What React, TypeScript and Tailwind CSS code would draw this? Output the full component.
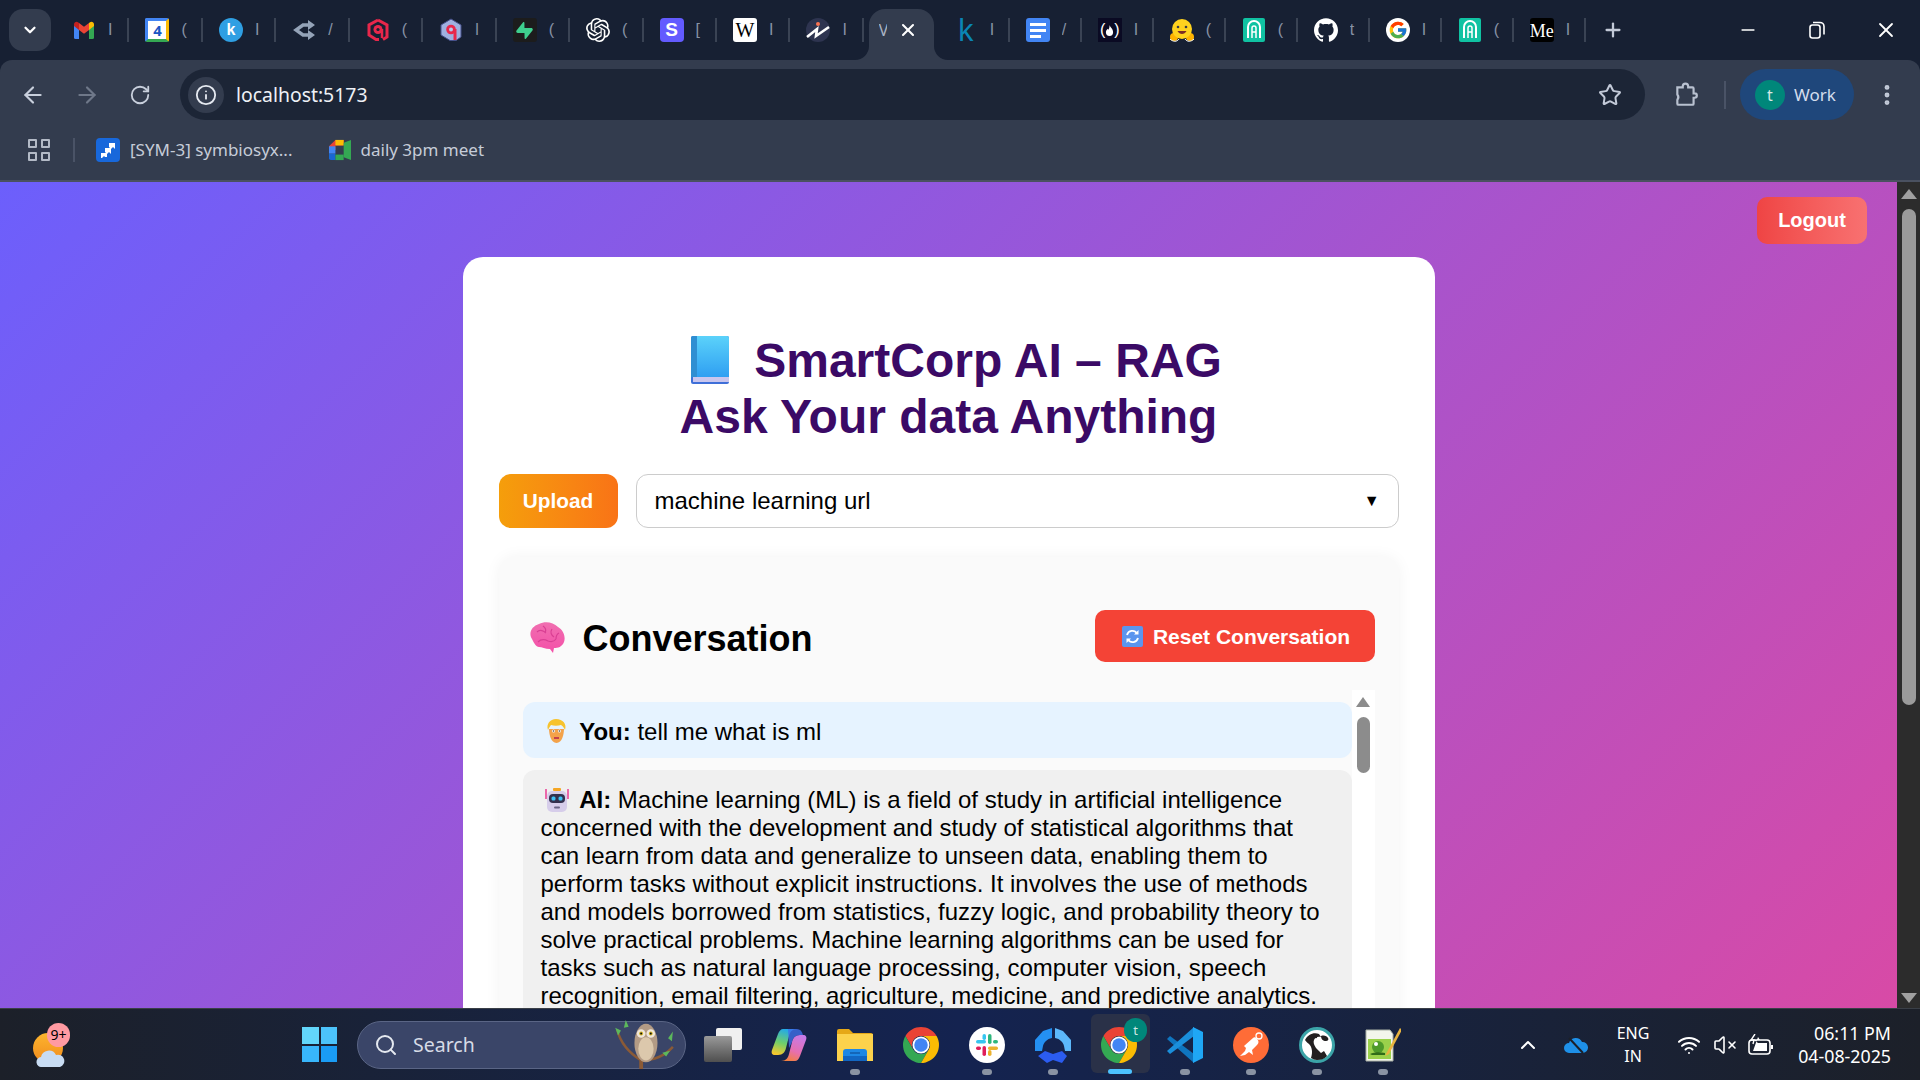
import { ArrowLeft, ArrowRight, RotateCw, Info, Star, EllipsisVertical, ChevronDown, ChevronUp, Plus, X, Minus, Search, Wifi, VolumeX } from "lucide-react"
import { SiOpenai, SiGithub, SiSupabase } from "react-icons/si"
import { FcGoogle } from "react-icons/fc"
import type { ReactNode } from "react"

const Gmail = () => (
  <svg viewBox="0 0 24 24" className="w-6 h-6">
    <path d="M2 6.5V19.5a1.5 1.5 0 0 0 1.500 1.500H7V11z" fill="#4285f4" />
    <path d="M22 6.500V19.500a1.500 1.500 0 0 1-1.500 1.500H17V11z" fill="#34a853" />
    <path d="M7 12 2 8V6.500C2 4 4.500 3 6 4.200L7 5z" fill="#c5221f" />
    <path d="M17 12l5-4V6.500C22 4 19.500 3 18 4.200L17 5z" fill="#fbbc04" />
    <path d="M7 5v7l5 3.800L17 12V5l-5 3.800z" fill="#ea4335" />
  </svg>
)

const Calendar = () => (
  <div className="w-6 h-6 bg-white rounded-[2px] border-[3px] border-t-[#4285f4] border-l-[#4285f4] border-r-[#fbbc04] border-b-[#34a853] flex items-center justify-center text-[#1a56c4] text-[15px] font-bold leading-none">4</div>
)

const Share = () => (
  <svg viewBox="0 0 24 24" className="w-6 h-6" fill="#94a3b8">
    <path d="M18 7h-7l-7 5 7 5h7" fill="none" stroke="#94a3b8" strokeWidth="3.400" />
    <path d="M16 2l7 5-7 5zM16 12l7 5-7 5z" />
  </svg>
)

const HexRed = () => (
  <svg viewBox="0 0 24 24" className="w-6 h-6">
    <path d="M12 2 21 7v12l-4 2.500M12 2 3 7v10l7 4.500h3" fill="none" stroke="#e8274b" strokeWidth="3" />
    <circle cx="12" cy="11.500" r="4.500" fill="#e8274b" />
    <circle cx="12" cy="11.500" r="1.600" fill="#172033" />
    <path d="M16 11v9" stroke="#e8274b" strokeWidth="2.500" />
  </svg>
)

const HexBlue = () => (
  <svg viewBox="0 0 24 24" className="w-6 h-6">
    <path d="M12 1 22 7v12l-5 3.500H11L2 17V7z" fill="#9fb0e0" stroke="#46508a" strokeWidth="1" />
    <circle cx="12" cy="11.500" r="4.800" fill="#e8274b" />
    <circle cx="12" cy="11.500" r="2" fill="#b9c6ec" />
    <path d="M16 11v11" stroke="#e8274b" strokeWidth="3" />
  </svg>
)

const Zig = () => (
  <svg viewBox="0 0 24 24" className="w-6 h-6">
    <ellipse cx="12" cy="12" rx="12" ry="12" fill="#2e3450" />
    <circle cx="12" cy="6" r="2" fill="#f97352" />
    <path d="M1 19 11 11l-1 7L23 9" fill="none" stroke="#fff" strokeWidth="2.600" />
  </svg>
)

const Docs = () => (
  <div className="w-6 h-6 bg-[#4285f4] rounded-[3px] flex flex-col justify-center gap-[3px] px-[4px]">
    <div className="h-[3px] bg-white" />
    <div className="h-[3px] bg-white" />
    <div className="h-[3px] w-[11px] bg-white" />
  </div>
)

const Fcc = () => (
  <div className="w-6 h-6 bg-[#0a0a23] text-white text-[16px] flex items-center justify-center leading-none" style={{ fontFamily: "Liberation Sans" }}>
    (<svg viewBox="0 0 10 12" className="w-[9px] h-[11px]"><path d="M5 0c1 3 4 4 4 8a4 4 0 0 1-8 0c0-2 1-3 2-4 0 1 1 1 1 1 1-2 1-3 1-5z" fill="#fff" /></svg>)
  </div>
)

const Hug = () => (
  <svg viewBox="0 0 24 24" className="w-6 h-6">
    <circle cx="4" cy="19" r="4" fill="#ffb300" />
    <circle cx="20" cy="19" r="4" fill="#ffb300" />
    <circle cx="12" cy="11" r="10" fill="#ffd21e" />
    <circle cx="8" cy="9" r="1.300" fill="#3a3b45" />
    <circle cx="16" cy="9" r="1.300" fill="#3a3b45" />
    <path d="M7.500 13c2 4 7 4 9 0z" fill="#7b2d26" />
    <path d="M0 21c3 3 7 3 9 0M24 21c-3 3-7 3-9 0" stroke="#fff" strokeWidth="1" fill="none" />
  </svg>
)

const Teal = () => (
  <svg viewBox="0 0 24 24" className="w-6 h-6">
    <rect x="1" width="22" height="24" rx="2" fill="#10c2a2" />
    <path d="M6 20V9a6 6 0 0 1 12 0v11" fill="none" stroke="#fff" strokeWidth="2" />
    <path d="M10 20v-10a2 2 0 0 1 4 0v10M10 14h4" fill="none" stroke="#fff" strokeWidth="1.500" />
  </svg>
)

type Tab = { icon: ReactNode; frag: string }

const leftTabs: Tab[] = [
  { icon: <Gmail />, frag: "I" },
  { icon: <Calendar />, frag: "(" },
  { icon: <div className="w-6 h-6 rounded-full bg-[#2f9fe3] text-white text-[16px] font-bold flex items-center justify-center" style={{ fontFamily: "Liberation Sans" }}>k</div>, frag: "I" },
  { icon: <Share />, frag: "/" },
  { icon: <HexRed />, frag: "(" },
  { icon: <HexBlue />, frag: "l" },
  { icon: <div className="w-6 h-6 bg-[#1c1c1c] rounded-[3px] flex items-center justify-center"><SiSupabase className="w-[17px] h-[17px] text-[#3ecf8e]" /></div>, frag: "(" },
  { icon: <SiOpenai className="w-6 h-6 text-white" />, frag: "(" },
  { icon: <div className="w-6 h-6 rounded-[4px] bg-[#635bff] text-white text-[19px] font-bold flex items-center justify-center" style={{ fontFamily: "Liberation Sans" }}>S</div>, frag: "[" },
  { icon: <div className="w-6 h-6 rounded-[3px] bg-white text-black text-[20px] flex items-center justify-center" style={{ fontFamily: "Liberation Serif" }}>W</div>, frag: "I" },
  { icon: <Zig />, frag: "I" },
]

const rightTabs: Tab[] = [
  { icon: <div className="w-6 h-6 text-[#0a85b5] text-[30px] flex items-center justify-center leading-none" style={{ fontFamily: "Noto Sans" }}>k</div>, frag: "I" },
  { icon: <Docs />, frag: "/" },
  { icon: <Fcc />, frag: "I" },
  { icon: <Hug />, frag: "(" },
  { icon: <Teal />, frag: "(" },
  { icon: <SiGithub className="w-6 h-6 text-white" />, frag: "t" },
  { icon: <div className="w-6 h-6 rounded-full bg-white flex items-center justify-center"><FcGoogle className="w-5 h-5" /></div>, frag: "I" },
  { icon: <Teal />, frag: "(" },
  { icon: <div className="w-6 h-6 rounded-[3px] bg-black text-white text-[18px] overflow-hidden" style={{ fontFamily: "Liberation Serif" }}>Me</div>, frag: "I" },
]

function TabItem({ tab, wide }: { tab: Tab; wide: boolean }) {
  return (
    <div className={`flex items-center h-6 shrink-0 pl-4 ${wide ? "w-[73.45px]" : "w-[72px]"}`}>
      <div className="w-6 h-6 shrink-0">{tab.icon}</div>
      <span className="ml-[12px] w-[8px] overflow-hidden text-[16px] text-[#8792a6] leading-6" style={{ fontFamily: "Liberation Sans" }}>{tab.frag}</span>
      <div className="ml-auto w-[2px] h-6 bg-[#3a4354]" />
    </div>
  )
}

function TabStrip() {
  return (
    <div className="h-[60px] bg-[#172033] flex items-center shrink-0">
      <div className="ml-[9px] w-[42px] h-[42px] rounded-[14px] bg-[#333c4e] flex items-center justify-center mr-[5px] shrink-0">
        <ChevronDown className="w-[18px] h-[18px] text-white" strokeWidth={3} />
      </div>
      {leftTabs.map((t, i) => <TabItem key={i} tab={t} wide />)}
      <div className="relative self-end h-[51px] w-[65px] ml-[5px] mr-[4px] bg-[#333c4e] rounded-t-[16px] flex items-start pt-[11px] shrink-0">
        <svg viewBox="0 0 14 14" className="absolute bottom-0 -left-[14px] w-[14px] h-[14px]"><path d="M14 0v14H0a14 14 0 0 0 14-14z" fill="#333c4e" /></svg>
        <svg viewBox="0 0 14 14" className="absolute bottom-0 -right-[14px] w-[14px] h-[14px]"><path d="M0 0v14h14A14 14 0 0 1 0 0z" fill="#333c4e" /></svg>
        <span className="ml-[10px] w-[8px] overflow-hidden text-[16px] leading-[20px] text-[#aab3c4]">V</span>
        <X className="ml-[11px] w-[20px] h-[20px] text-white" strokeWidth={2.500} />
      </div>
      {rightTabs.map((t, i) => <TabItem key={i} tab={t} wide={false} />)}
      <Plus className="ml-[16px] w-[22px] h-[22px] text-[#c3cad8]" strokeWidth={2.500} />
      <div className="ml-auto flex text-white shrink-0">
        <div className="w-[69px] h-[60px] flex items-center justify-center"><Minus className="w-[20px] h-[20px]" strokeWidth={2} /></div>
        <div className="w-[69px] h-[60px] flex items-center justify-center">
          <svg viewBox="0 0 16 18" className="w-[16px] h-[18px]" fill="none" stroke="#fff" strokeWidth="1.600"><rect x="1" y="4" width="10" height="13" rx="2.500" /><path d="M4 1.500h7a4 4 0 0 1 4 4v8" /></svg>
        </div>
        <div className="w-[69px] h-[60px] flex items-center justify-center"><X className="w-[24px] h-[24px]" strokeWidth={1.800} /></div>
      </div>
    </div>
  )
}

function Toolbar() {
  return (
    <div className="h-[60px] bg-[#333c4e] rounded-t-[12px] flex shrink-0 pt-[9px]">
      <div className="w-[180px] h-[51px] flex items-center shrink-0">
        <ArrowLeft className="ml-[20px] w-[26px] h-[26px] text-[#c8cfdc]" strokeWidth={2} />
        <ArrowRight className="ml-[28px] w-[26px] h-[26px] text-[#6f7889]" strokeWidth={2} />
        <RotateCw className="ml-[29px] w-[22px] h-[22px] text-[#c8cfdc]" strokeWidth={2} />
      </div>
      <div className="w-[1465px] h-[51px] rounded-full bg-[#1c2536] flex items-center pl-2 shrink-0">
        <div className="w-9 h-9 rounded-full bg-[#333c4e] flex items-center justify-center">
          <Info className="w-[22px] h-[22px] text-[#e5e9f0]" strokeWidth={2} />
        </div>
        <span className="ml-3 text-[19.400px] text-[#eef1f6]">localhost:5173</span>
        <Star className="ml-auto mr-[23px] w-[24px] h-[24px] text-[#c3cad8]" strokeWidth={2} />
      </div>
      <div className="flex-1 h-[51px] flex items-center">
        <svg viewBox="0 0 24 24" className="ml-[28px] w-[26px] h-[26px]" fill="none" stroke="#b9c1d0" strokeWidth="2">
          <path d="M4 5h5V4a2.500 2.500 0 0 1 5 0v1h4a1 1 0 0 1 1 1v4.500h1a2 2 0 0 1 0 4h-1V20a1 1 0 0 1-1 1H5a1 1 0 0 1-1-1v-3.500a4 4 0 0 0 0-5z" />
        </svg>
        <div className="ml-[25px] w-[2px] h-[28px] bg-[#4a5366]" />
        <div className="ml-[14px] w-[114px] h-[51px] rounded-full bg-[#1f477b] flex items-center pl-[15px]">
          <div className="w-[30px] h-[30px] rounded-full bg-[#00877a] flex items-center justify-center text-[#d5e8e5] text-[16px]">t</div>
          <span className="ml-[9px] text-[#d3dded] text-[17px]">Work</span>
        </div>
        <EllipsisVertical className="ml-[20px] w-[26px] h-[26px] text-[#c3cad8]" strokeWidth={2.500} />
      </div>
    </div>
  )
}

function Bookmarks() {
  return (
    <div className="h-[62px] bg-[#333c4e] border-b-2 border-[#4a5160] flex items-center shrink-0">
      <div className="ml-[28px] w-[22px] h-[22px] grid grid-cols-2 gap-[4px] shrink-0">
        <div className="border-2 border-[#b3bac6] rounded-[1px]" />
        <div className="border-2 border-[#b3bac6] rounded-[1px]" />
        <div className="border-2 border-[#b3bac6] rounded-[1px]" />
        <div className="border-2 border-[#b3bac6] rounded-[1px]" />
      </div>
      <div className="ml-[23px] w-[2px] h-6 bg-[#4a5366]" />
      <div className="ml-[21px] w-6 h-6 rounded-[4px] bg-[#1868db] flex items-center justify-center">
        <svg viewBox="0 0 16 16" className="w-[16px] h-[16px]" fill="#fff"><path d="M9 1h6v6l-2-2-2 2-2-2zM5 6h6v6l-2-2-2 2-2-2zM1 11h6v4H5l-1-1-2 2H1z" /></svg>
      </div>
      <span className="ml-[10px] text-[17px] text-[#c6ccd8]">[SYM-3] symbiosyx...</span>
      <svg viewBox="0 0 24 22" className="ml-[36px] w-[22px] h-[22px]">
        <path d="M7 0h9v6H7v5H0V7z" fill="#ea4335" />
        <path d="M7 0h9v6H7z" fill="#fbbc04" />
        <path d="M0 7h7v8H0z" fill="#4285f4" />
        <path d="M0 15h7v7H2a2 2 0 0 1-2-2z" fill="#1967d2" />
        <path d="M7 16h9v6H7z" fill="#34a853" />
        <path d="M16 3v16l8 3V0z" fill="#34a853" />
      </svg>
      <span className="ml-[10px] text-[17px] text-[#c6ccd8]">daily 3pm meet</span>
    </div>
  )
}

const Book = () => (
  <svg viewBox="0 0 38 48" className="inline-block ml-[16px] mr-[25px] w-[38px] h-[48px] align-[-7px]">
    <defs>
      <linearGradient id="bk" x1="0" y1="0" x2="0" y2="1"><stop offset="0" stopColor="#5bd2fa" /><stop offset="1" stopColor="#2f9ff2" /></linearGradient>
    </defs>
    <rect width="38" height="48" rx="2" fill="#3f6fd8" />
    <rect x="2" y="41" width="36" height="5" fill="#c9c6ee" />
    <path d="M6 0h30a2 2 0 0 1 2 2v39H6z" fill="url(#bk)" />
    <path d="M2 0h4v41H2a2 2 0 0 0-2 2V2a2 2 0 0 1 2-2z" fill="#2f8fd2" />
  </svg>
)

const Brain = () => (
  <svg viewBox="0 0 36 32" className="inline-block ml-[6px] mr-[18px] w-[36px] h-[32px] align-[-3px]">
    <defs>
      <linearGradient id="br" x1="0" y1="0" x2="0" y2="1"><stop offset="0" stopColor="#f06fb0" /><stop offset="1" stopColor="#f44fa8" /></linearGradient>
    </defs>
    <path d="M3 17C-1 11 3 4 10 2c6-3 14-2 19 3 5 3 8 9 6 15-2 5-6 6-10 6l-1 5-3-4c-5 0-8-2-11-2-3 0-5-4-7-8z" fill="url(#br)" />
    <path d="M8 10c3-3 7-1 9 1M14 4c3 2 3 5 2 7M23 7c-2 3-1 6 2 8M9 20c3-3 6-3 10-1 3 1 6 1 8-2M30 11c-2 1-3 3-3 6" fill="none" stroke="#d93f93" strokeWidth="1.200" />
  </svg>
)

const Person = () => (
  <span className="inline-block w-[32px] pl-[5px] align-[-3px]">
    <svg viewBox="0 0 21 24" className="w-[21px] h-[24px] block">
      <path d="M3 10C3 15 5 24 10.500 24S18 15 18 10z" fill="#f3a24a" />
      <path d="M2 11C0 5 4 0 10 0c7 0 11 5 9 11-1-2-2-4-4-5-3 1-7 1-10 0-1 1-2 3-3 5z" fill="#f7c32e" />
      <circle cx="7.500" cy="12" r="1.500" fill="#fff" /><circle cx="13.500" cy="12" r="1.500" fill="#fff" />
      <circle cx="7.500" cy="12" r=".8" fill="#444" /><circle cx="13.500" cy="12" r=".8" fill="#444" />
      <path d="M8 19h5" stroke="#b3204d" strokeWidth="1.500" />
    </svg>
  </span>
)

const Robot = () => (
  <span className="inline-block w-[32px] pl-[4px] align-[-4px]">
    <svg viewBox="0 0 24 24" className="w-[24px] h-[24px] block">
      <rect x="8" y="0" width="8" height="3" rx="1" fill="#f5a623" />
      <path d="M1 1v10M23 1v10" stroke="#ec4899" strokeWidth="1.600" />
      <rect x="2" y="3" width="20" height="21" rx="5" fill="#d6cdea" />
      <rect x="4" y="6" width="16" height="9" rx="4" fill="#33304d" />
      <rect x="6.500" y="8.500" width="4" height="4" rx="1.500" fill="#3fc1f5" />
      <rect x="13.500" y="8.500" width="4" height="4" rx="1.500" fill="#3fc1f5" />
      <rect x="9" y="18.500" width="6" height="2" rx="1" fill="#6a6585" />
    </svg>
  </span>
)

const Refresh = () => (
  <svg viewBox="0 0 21 21" className="inline-block ml-[3px] mr-[10px] w-[21px] h-[21px] align-[-3px]">
    <rect width="21" height="21" rx="2" fill="#5b95ee" />
    <path d="M5 9a5.500 5.500 0 0 1 10-1.500M16 12a5.500 5.500 0 0 1-10 1.500" fill="none" stroke="#fff" strokeWidth="1.800" />
    <path d="M16.500 4v4.500H12zM4.500 17v-4.500H9z" fill="#fff" />
  </svg>
)

function Chat() {
  return (
    <div className="mt-[25px] flex">
      <div className="w-[829px] flex flex-col gap-3 pt-3">
        <div className="bg-[#e6f3ff] rounded-xl px-[18px] pt-[16px] pb-[12px] leading-[28px]">
          <Person /> <b>You:</b> tell me what is ml
        </div>
        <div className="bg-[#f0f0f0] rounded-xl px-[18px] pt-[16px] pb-[12px] leading-[28px]">
          <Robot /> <b>AI:</b> Machine learning (ML) is a field of study in artificial intelligence concerned with the development and study of statistical algorithms that can learn from data and generalize to unseen data, enabling them to perform tasks without explicit instructions. It involves the use of methods and models borrowed from statistics, fuzzy logic, and probability theory to solve practical problems. Machine learning algorithms can be used for tasks such as natural language processing, computer vision, speech recognition, email filtering, agriculture, medicine, and predictive analytics.
        </div>
      </div>
      <div className="w-[23px] bg-white flex flex-col items-center pt-[7px]">
        <div className="w-0 h-0 border-x-[7px] border-x-transparent border-b-[10px] border-b-[#8c8c8c]" />
        <div className="mt-[10px] w-[13px] h-[56px] rounded-full bg-[#8c8c8c]" />
      </div>
    </div>
  )
}

function Page() {
  return (
    <main className="relative flex-1 min-h-0 flex overflow-hidden" style={{ fontFamily: '"Liberation Sans", Arial, sans-serif' }}>
      <div className="relative flex-1 bg-[linear-gradient(135deg,#6c5ffc,#d84aa6)] pt-[75px]">
        <button className="absolute top-[15px] right-[30px] w-[110px] h-[47px] pb-[1px] rounded-[10px] bg-gradient-to-r from-[#ef4444] to-[#f87171] text-white text-[20px] font-bold">Logout</button>
        <div className="mx-auto w-[972px] bg-white rounded-[20px] px-9 pt-[76px] pb-10 text-[24px] text-black">
          <h1 className="text-[48px] leading-[56px] font-bold text-center text-[#3b0a66]">
            <Book />SmartCorp AI – RAG<br />Ask Your data Anything
          </h1>
          <div className="mt-[29px] flex gap-[18px]">
            <button className="w-[119px] h-[54px] rounded-xl bg-gradient-to-r from-[#f59e0b] to-[#f97316] text-white text-[20.800px] font-bold">Upload</button>
            <div className="flex-1 h-[54px] rounded-xl border border-[#cccccc] bg-white flex items-center pl-[18px] pr-[18px]">
              <span>machine learning url</span>
              <span className="ml-auto text-[16px]">▼</span>
            </div>
          </div>
          <div className="mt-[29px] bg-[#fafafa] rounded-2xl shadow-[0_0_16px_rgba(0,0,0,0.05)] px-6 pt-[53px] pb-6">
            <div className="flex items-start justify-between">
              <h2 className="text-[36px] font-bold leading-[52px] pt-[3px]"><Brain />Conversation</h2>
              <button className="w-[280px] h-[52px] pt-[2px] rounded-[10px] bg-[#f44336] text-white text-[21px] font-bold"><Refresh />Reset Conversation</button>
            </div>
            <Chat />
          </div>
        </div>
      </div>
      <aside className="w-[23px] bg-[#2c2c2c] flex flex-col items-center pt-[7px] shrink-0">
        <div className="w-0 h-0 border-x-[8px] border-x-transparent border-b-[10px] border-b-[#a0a0a0]" />
        <div className="mt-[10px] w-[14px] h-[496px] rounded-full bg-[#9b9b9b]" />
        <div className="mt-auto mb-[5px] w-0 h-0 border-x-[8px] border-x-transparent border-t-[10px] border-t-[#a0a0a0]" />
      </aside>
    </main>
  )
}

const Chrome = () => (
  <svg viewBox="0 0 24 24" className="w-9 h-9">
    <path d="M22.390 6A12 12 0 0 0 1.610 6L6.800 15A6 6 0 0 1 12 6z" fill="#ea4335" />
    <path d="M1.610 6A12 12 0 0 0 12 24L17.200 15A6 6 0 0 1 6.800 15z" fill="#34a853" />
    <path d="M12 24A12 12 0 0 0 22.390 6H12A6 6 0 0 1 17.200 15z" fill="#fbbc04" />
    <circle cx="12" cy="12" r="5.700" fill="#fff" />
    <circle cx="12" cy="12" r="4.500" fill="#4285f4" />
  </svg>
)

const Copilot = () => (
  <svg viewBox="0 0 36 36" className="w-9 h-9">
    <defs>
      <linearGradient id="cp1" x1="0.600" y1="0" x2="0.300" y2="1"><stop offset="0" stopColor="#1fa8ee" /><stop offset=".55" stopColor="#6fce6a" /><stop offset="1" stopColor="#f5c72e" /></linearGradient>
      <linearGradient id="cp2" x1="0.700" y1="0" x2="0.300" y2="1"><stop offset="0" stopColor="#c77be8" /><stop offset=".6" stopColor="#e66fb0" /><stop offset="1" stopColor="#f2803f" /></linearGradient>
    </defs>
    <path d="M12 2h14c-5 0-7 3-8 7l-3 12c-1 4-3 7-8 7H4c-3 0-4-2-3-5L7 7c1-3 3-5 5-5z" fill="url(#cp1)" />
    <path d="M24 34H10c5 0 7-3 8-7l3-12c1-4 3-7 8-7h3c3 0 4 2 3 5l-6 16c-1 3-3 5-5 5z" fill="url(#cp2)" />
    <path d="M17 2h9c3 0 5 2 6 6h-3c-5 0-7 3-8 7l-3 6z" fill="#3f6fe8" opacity=".8" />
  </svg>
)

const Folder = () => (
  <svg viewBox="0 0 36 36" className="w-9 h-9">
    <path d="M0 4a2 2 0 0 1 2-2h10l4 4h18a2 2 0 0 1 2 2v4H0z" fill="#e6a817" />
    <path d="M0 7h36v27H0z" fill="#fcd24c" />
    <path d="M6 34v-9a3 3 0 0 1 3-3h18a3 3 0 0 1 3 3v9z" fill="#1e88e5" />
    <path d="M6 29h24v5H6z" fill="#1266c2" />
    <path d="M13 26h10" stroke="#0f4f99" strokeWidth="1.200" />
  </svg>
)

const Slack = () => (
  <div className="w-9 h-9 rounded-full bg-white flex items-center justify-center">
    <svg viewBox="0 0 24 24" className="w-6 h-6">
      <rect x="1" y="7" width="10" height="3.500" rx="1.750" fill="#36c5f0" />
      <rect x="7.500" y="1" width="3.500" height="6" rx="1.750" fill="#36c5f0" />
      <rect x="13" y="1" width="3.500" height="10" rx="1.750" fill="#2eb67d" />
      <rect x="18" y="7" width="5" height="3.500" rx="1.750" fill="#2eb67d" />
      <rect x="13" y="13.500" width="10" height="3.500" rx="1.750" fill="#ecb22e" />
      <rect x="13" y="17" width="3.500" height="6" rx="1.750" fill="#ecb22e" />
      <rect x="1" y="13.500" width="5" height="3.500" rx="1.750" fill="#e01e5a" />
      <rect x="7.500" y="13" width="3.500" height="10" rx="1.750" fill="#e01e5a" />
    </svg>
  </div>
)

const Cube = () => (
  <svg viewBox="0 0 36 36" className="w-9 h-9">
    <path d="M17 1v10c-5 1-8 4-9 8l-1 5H0V13l8-9z" fill="#2490f2" />
    <path d="M20 1v10c5 1 8 4 9 8l1 5h6V13l-8-9z" fill="#5cb8fb" />
    <path d="M3 29l7-5 8 3 9-3 5 5-5 7-9-3-6 3z" fill="#2b5cf0" />
  </svg>
)

const VSCode = () => (
  <svg viewBox="0 0 36 36" className="w-9 h-9">
    <path d="M0 12l3-3 24 18v9z" fill="#0f75bf" />
    <path d="M0 24l3 3L27 9V0z" fill="#1a8fdc" />
    <path d="M26 0l10 5v26l-10 5z" fill="#1fa7f5" />
  </svg>
)

const Postman = () => (
  <svg viewBox="0 0 36 36" className="w-9 h-9">
    <circle cx="18" cy="18" r="18" fill="#ff6c37" />
    <circle cx="26" cy="9" r="3" fill="none" stroke="#fff" strokeWidth="1.300" />
    <path d="M24 12c2 2 2 4 0 6l-5 5 1 5-4-3-4 3-5 1 5-5 1-3-2-2 9-8c1-1 3-1 4 1z" fill="#fff" />
  </svg>
)

const Beaver = () => (
  <svg viewBox="0 0 36 36" className="w-9 h-9">
    <circle cx="18" cy="18" r="16.500" fill="#fff" stroke="#3ba4a8" strokeWidth="3" />
    <path d="M6 13c3-6 9-8 14-6l2 3c-3-1-6 0-7 3-1 2 0 5 2 8l5 5 3-2 3 5c-3 3-6 4-10 4-2 0-4-1-6-2 2-6 1-11-2-14-2-1-3-3-4-4z" fill="#231f20" />
    <path d="M22 9c3-1 6 0 7 2 1 1 0 3-2 3-3 0-5-2-5-5z" fill="#231f20" />
    <circle cx="17" cy="10" r="1.200" fill="#231f20" />
  </svg>
)

const Notepad = () => (
  <svg viewBox="0 0 36 36" className="w-9 h-9">
    <path d="M1 3h24l3 4v27H1z" fill="#f3f6ec" stroke="#a9b0a5" strokeWidth="1" />
    <path d="M3 12h23v20H3z" fill="#9ad14b" />
    <circle cx="13" cy="20" r="6" fill="#4e9a2a" />
    <circle cx="11" cy="17" r="2" fill="#fff" />
    <path d="M5 27c4-2 10-2 15-1v2H7z" fill="#2f6b18" />
    <path d="M35 1 22 25l-2 4 4-2 13-24z" fill="#e8b33f" />
  </svg>
)

const Weather = () => (
  <div className="relative w-[37px] h-[44px] shrink-0">
    <div className="absolute left-0 top-[10px] w-[30px] h-[30px] rounded-full bg-gradient-to-b from-[#fdb52e] to-[#f08b1d]" />
    <svg viewBox="0 0 30 20" className="absolute left-[3px] top-[24px] w-[30px] h-[20px]">
      <path d="M6 20a5 5 0 0 1-1-10 8 8 0 0 1 15-2 6 6 0 0 1 4 12z" fill="#c8dcf3" />
    </svg>
    <div className="absolute left-[14px] top-0 w-[23px] h-[24px] rounded-full bg-[#ff9aa2] text-black text-[14px] leading-[24px] text-center">9+</div>
  </div>
)

const Owl = () => (
  <svg viewBox="0 0 64 52" className="w-[64px] h-[50px]">
    <path d="M3 10c3 12 12 24 25 32 12 0 24-4 33-14" fill="none" stroke="#8b5a36" strokeWidth="2.500" />
    <path d="M28 42v9" stroke="#8b5a36" strokeWidth="4" />
    <path d="M4 16l-3-8 6 3zM10 8l2-8 3 7zM60 22l1-10-5 7zM50 34l8-2-4 6z" fill="#5cb85c" />
    <ellipse cx="33" cy="24" rx="12" ry="20" fill="#b39b85" />
    <ellipse cx="33" cy="30" rx="8" ry="12" fill="#dcc8ac" />
    <circle cx="28" cy="14" r="4.500" fill="#f0e6d8" /><circle cx="38" cy="14" r="4.500" fill="#f0e6d8" />
    <circle cx="28" cy="14" r="2" fill="#d2b21c" /><circle cx="38" cy="14" r="2" fill="#d2b21c" />
    <circle cx="28" cy="14" r="1" fill="#111" /><circle cx="38" cy="14" r="1" fill="#111" />
  </svg>
)

function Slot({ children, dot }: { children: ReactNode; dot?: boolean }) {
  return (
    <div className="relative w-[66px] h-[72px] flex items-center justify-center shrink-0">
      {children}
      {dot && <div className="absolute bottom-[6px] left-[28px] w-[10px] h-[6px] rounded-full bg-[#8a93a3]" />}
    </div>
  )
}

function Taskbar() {
  return (
    <div className="h-[72px] shrink-0 border-t border-[#3a3f47] bg-gradient-to-r from-[#1c2029] via-[#142350] to-[#1c2029] flex items-center text-white" style={{ fontFamily: '"Noto Sans", sans-serif' }}>
      <div className="ml-[33px]"><Weather /></div>
      <div className="ml-[232px] w-[35px] h-[35px] grid grid-cols-2 gap-[2px] shrink-0">
        <div className="bg-[#62d6fb]" /><div className="bg-[#4cc3fb]" /><div className="bg-[#38b6fb]" /><div className="bg-[#1a9cf5]" />
      </div>
      <div className="ml-[20px] w-[329px] h-[48px] rounded-full bg-[#3a4568] border border-[#5a6585] flex items-center pl-[16px] shrink-0">
        <Search className="w-[24px] h-[24px] text-[#e5e9f0]" strokeWidth={2} />
        <span className="ml-[15px] text-[19.500px] text-[#d6dbe6]">Search</span>
        <div className="ml-auto mr-[8px]"><Owl /></div>
      </div>
      <div className="ml-[4px] flex shrink-0">
        <Slot>
          <div className="relative w-[38px] h-[34px]">
            <div className="absolute right-0 top-0 w-[26px] h-[22px] rounded-[2px] bg-[#f0f0f0]" />
            <div className="absolute left-0 bottom-0 w-[28px] h-[26px] rounded-[2px] bg-gradient-to-b from-[#9a9a9a] to-[#4f4f4f]" />
          </div>
        </Slot>
        <Slot><Copilot /></Slot>
        <Slot dot><Folder /></Slot>
        <Slot><Chrome /></Slot>
        <Slot dot><Slack /></Slot>
        <Slot dot><Cube /></Slot>
        <Slot>
          <div className="absolute top-[5px] left-[5px] w-[59px] h-[59px] rounded-[6px] bg-[#2a3148]" />
          <div className="relative"><Chrome /></div>
          <div className="absolute top-[9px] left-[38px] w-[23px] h-[24px] rounded-full bg-[#00877a] text-[#cfe6e3] text-[13px] leading-[24px] text-center">t</div>
          <div className="absolute bottom-[7px] left-[22px] w-[24px] h-[5px] rounded-full bg-[#4cc2ff]" />
        </Slot>
        <Slot dot><VSCode /></Slot>
        <Slot dot><Postman /></Slot>
        <Slot dot><Beaver /></Slot>
        <Slot dot><Notepad /></Slot>
      </div>
      <ChevronUp className="ml-[100px] w-[24px] h-[24px] shrink-0" strokeWidth={2} />
      <svg viewBox="0 0 24 18" className="ml-[24px] w-[24px] h-[18px] shrink-0">
        <path d="M5 17a5 5 0 0 1 0-10 7 7 0 0 1 13-1 5.500 5.500 0 0 1 1 11z" fill="#1e90e8" />
        <path d="M5 2l14 15" stroke="#1c2029" strokeWidth="2" />
      </svg>
      <div className="ml-[23px] w-[44px] text-center text-[16px] leading-[23px] shrink-0">ENG<br />IN</div>
      <Wifi className="ml-[22px] w-[24px] h-[24px] shrink-0" strokeWidth={2} />
      <VolumeX className="ml-[12px] w-[24px] h-[24px] shrink-0" strokeWidth={1.600} />
      <svg viewBox="0 0 26 22" className="ml-[11px] w-[26px] h-[22px] shrink-0" fill="none" stroke="#fff" strokeWidth="1.600">
        <rect x="1" y="6" width="21" height="14" rx="3" />
        <path d="M24 11v4" strokeWidth="2" />
        <path d="M6 6 12 6 10 3 5 17 19 17 19 9 10 9z" fill="#fff" stroke="none" />
        <path d="M7 0 3 6h3L5 10" strokeWidth="1.400" />
      </svg>
      <div className="ml-auto mr-[29px] text-right text-[17.800px] leading-[23px] shrink-0">06:11 PM<br />04-08-2025</div>
    </div>
  )
}

export default function App() {
  return (
    <div className="w-screen h-screen overflow-hidden flex flex-col bg-[#172033]" style={{ fontFamily: '"Noto Sans", sans-serif' }}>
      <TabStrip />
      <Toolbar />
      <Bookmarks />
      <Page />
      <Taskbar />
    </div>
  )
}
